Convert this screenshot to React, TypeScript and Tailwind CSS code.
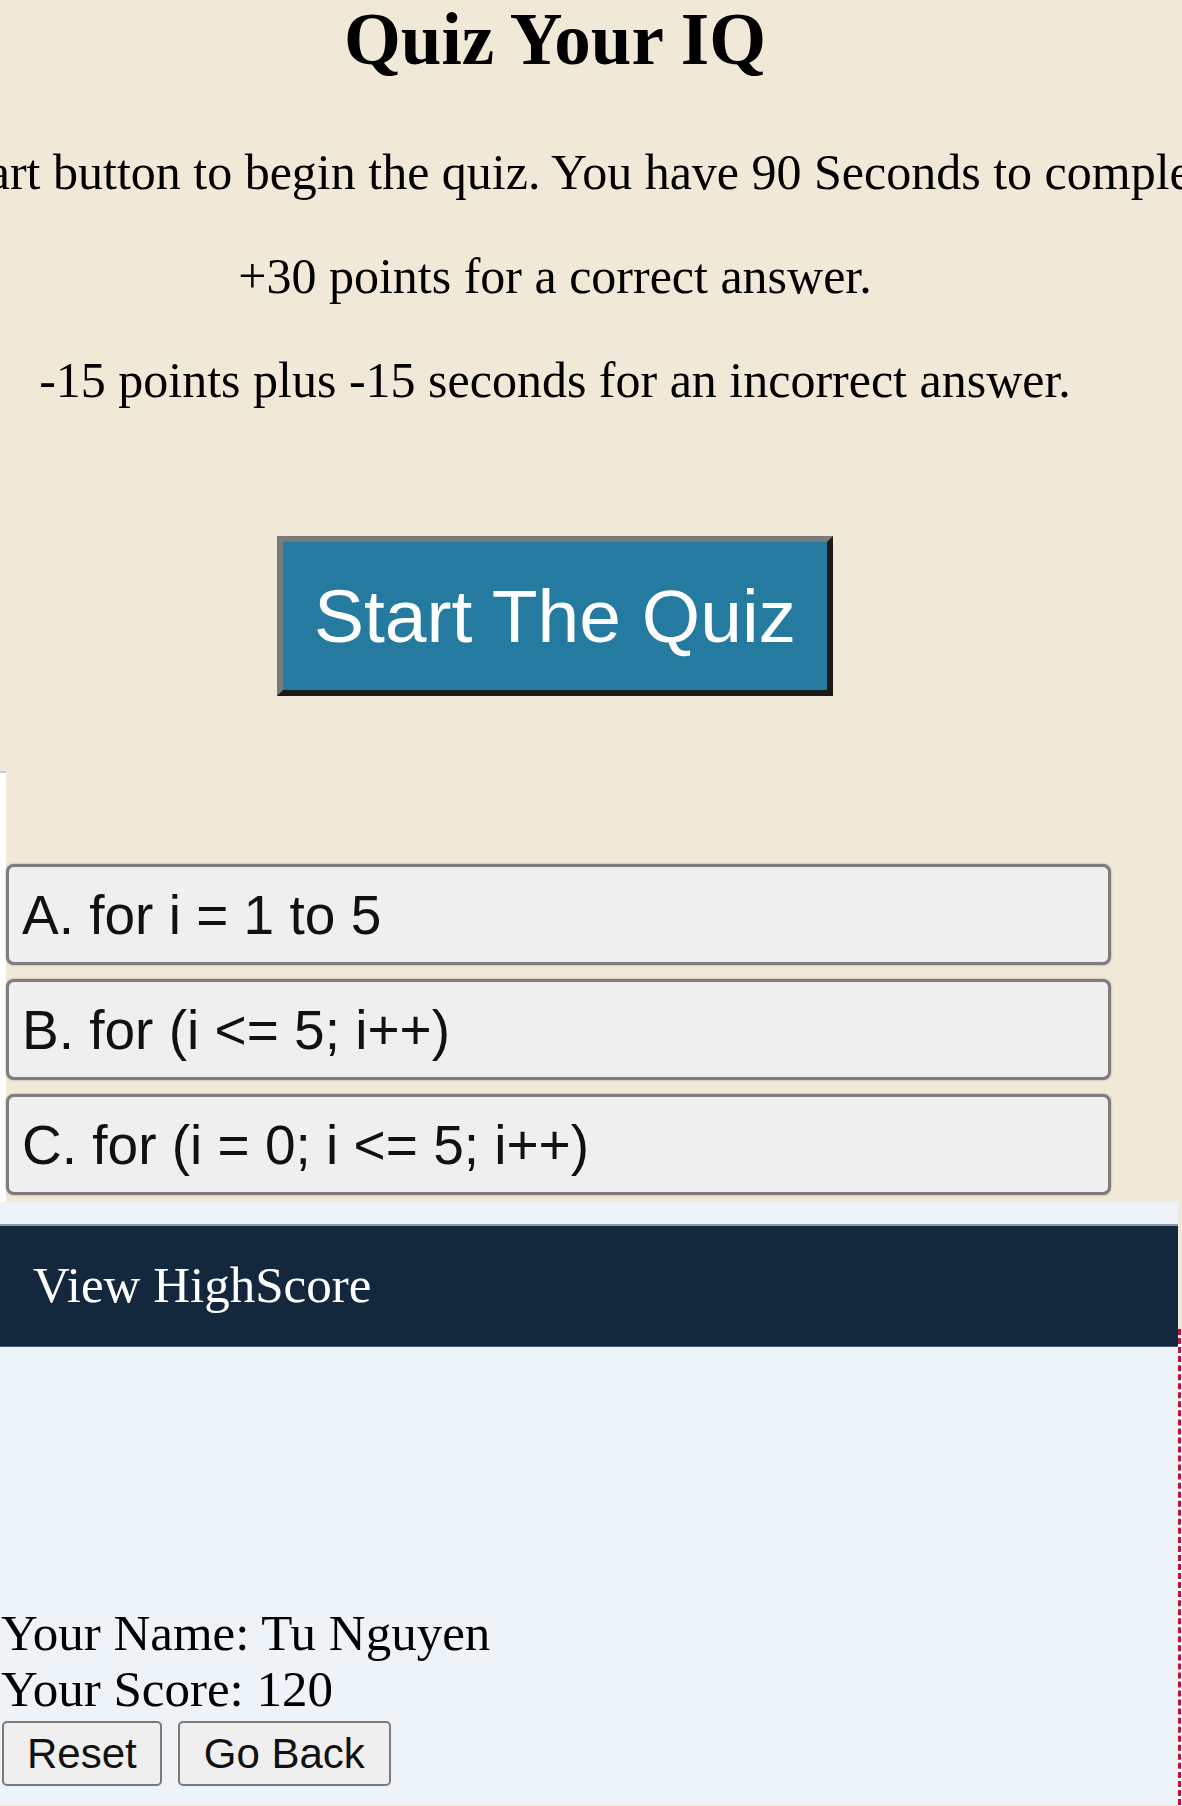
import React from "react";

const serif = "font-['Liberation_Serif','Times_New_Roman',serif]";
const sans = "font-['Liberation_Sans',Arial,sans-serif]";

const options = ["A. for i = 1 to 5", "B. for (i <= 5; i++)", "C. for (i = 0; i <= 5; i++)"];

export default function App() {
  return (
    <div className="w-[1182px] h-[1806px] overflow-hidden bg-[#f1e9d7] text-black">
      {/* Intro */}
      <div className={`w-[1110px] flex flex-col items-center ${serif}`}>
        <h1 className="text-[73px] leading-[80px] font-bold">Quiz Your IQ</h1>

        <div className="mt-[64px] w-full flex justify-center text-[50px] leading-[56px]">
          <p className="shrink-0 whitespace-nowrap">
            Click on the start button to begin the quiz. You have 90 Seconds to complete the quiz.
          </p>
        </div>
        <p className="mt-[48px] text-[50px] leading-[56px] whitespace-nowrap">+30 points for a correct answer.</p>
        <p className="mt-[48px] text-[50px] leading-[56px] whitespace-nowrap">
          -15 points plus -15 seconds for an incorrect answer.
        </p>

        <button
          className={`mt-[128px] px-[31px] py-[31px] bg-[#257aa0] text-white text-[75px] leading-[86px] border-[6px] border-solid border-t-[#7a7a7a] border-l-[#7a7a7a] border-r-[#1a1a1a] border-b-[#1a1a1a] ${sans}`}
        >
          Start The Quiz
        </button>
      </div>

      {/* Answer options */}
      <div className="mt-[75px] flex h-[431px]">
        <div className="w-[6px] shrink-0 bg-white border-t-2 border-[#c3ccd6]" />
        <div className="w-[1105px] pt-[93px] flex flex-col gap-[14px]">
          {options.map((opt) => (
            <button
              key={opt}
              className={`w-full text-left pl-[13px] pt-[17px] pb-[16px] text-[55px] leading-[62px] bg-[#efefef] text-[#111] border-[3px] border-[#7d7d7d] rounded-[8px] shadow-[0_0_2px_rgba(0,0,0,0.4)] ${sans}`}
            >
              {opt}
            </button>
          ))}
        </div>
      </div>

      {/* High score panel */}
      <div className="flex h-[603px]">
        <div className={`w-[1178px] shrink-0 bg-[#eef3f8] pt-[22px] ${serif}`}>
          <nav className="h-[123px] bg-[#14283d] border-t-2 border-b border-t-[#8796a8] border-b-[#4d5f73] pl-[33px] pt-[30px]">
            <span className="text-white text-[51px] leading-[58px]">View HighScore</span>
          </nav>

          <div className="mt-[258px]">
            <p className="pl-[1px] text-[51px] leading-[56px]">Your Name: Tu Nguyen</p>
            <p className="pl-[1px] text-[51px] leading-[56px]">Your Score: 120</p>
            <div className="mt-[4px] pl-[2px] flex gap-[16px]">
              <button
                className={`h-[65px] px-[23px] text-[42px] leading-[48px] bg-[#efefef] text-[#111] border-2 border-[#7a7a7a] rounded-[5px] ${sans}`}
              >
                Reset
              </button>
              <button
                className={`h-[65px] px-[24px] text-[42px] leading-[48px] bg-[#efefef] text-[#111] border-2 border-[#7a7a7a] rounded-[5px] ${sans}`}
              >
                Go Back
              </button>
            </div>
          </div>
        </div>
        <div className="flex-1 flex flex-col">
          <div className="h-[127px] bg-[#f1e9d7]" />
          <div className="flex-1 bg-white border-l-[3px] border-dashed border-[#c8102e]" />
        </div>
      </div>
    </div>
  );
}
